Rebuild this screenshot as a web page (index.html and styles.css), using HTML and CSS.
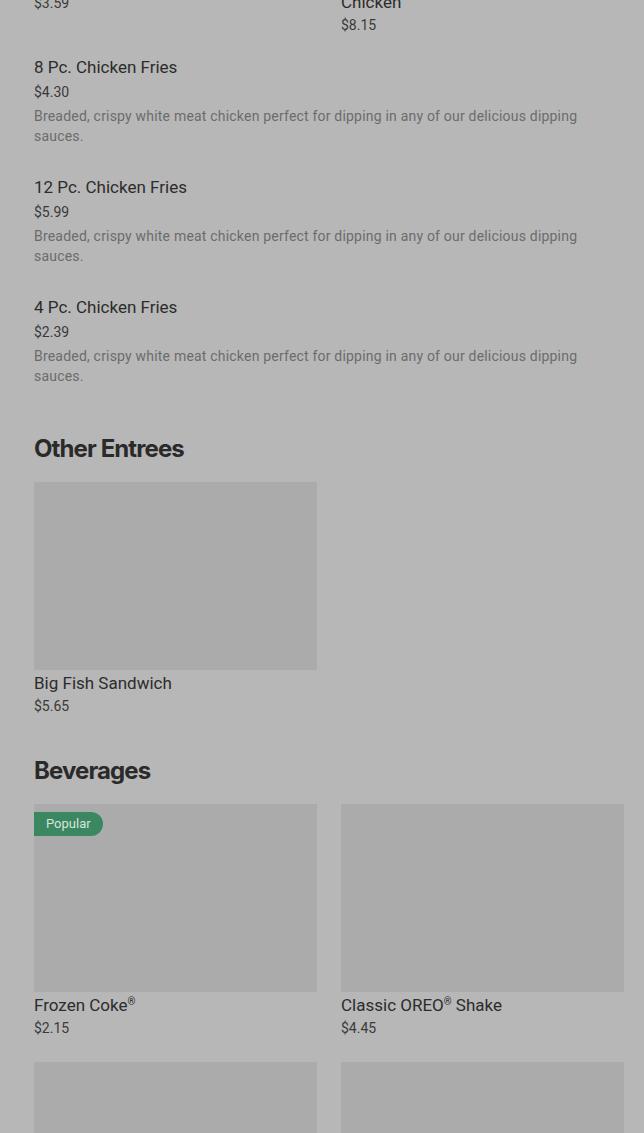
FILE: index.html
```html
<!DOCTYPE html>
<html>
<head>
<meta charset="utf-8">
<link rel="stylesheet" href="styles.css">
</head>
<body>
<main class="page">
  <div class="grid top-grid">
    <div class="card">
      <div class="thumb"></div>
      <div class="card-title">Crispy Chicken Sandwich</div>
      <div class="card-price">$3.59</div>
    </div>
    <div class="card">
      <div class="thumb"></div>
      <div class="card-title">10 Pc. Spicy Crispy<br>Chicken</div>
      <div class="card-price">$8.15</div>
    </div>
  </div>

  <div class="list">
    <div class="list-item">
      <div class="item-title">8 Pc. Chicken Fries</div>
      <div class="item-price">$4.30</div>
      <div class="item-desc">Breaded, crispy white meat chicken perfect for dipping in any of our delicious dipping sauces.</div>
    </div>
    <div class="list-item">
      <div class="item-title">12 Pc. Chicken Fries</div>
      <div class="item-price">$5.99</div>
      <div class="item-desc">Breaded, crispy white meat chicken perfect for dipping in any of our delicious dipping sauces.</div>
    </div>
    <div class="list-item">
      <div class="item-title">4 Pc. Chicken Fries</div>
      <div class="item-price">$2.39</div>
      <div class="item-desc">Breaded, crispy white meat chicken perfect for dipping in any of our delicious dipping sauces.</div>
    </div>
  </div>

  <section class="section">
    <h2 class="section-title">Other Entrees</h2>
    <div class="grid">
      <div class="card">
        <div class="thumb"></div>
        <div class="card-title">Big Fish Sandwich</div>
        <div class="card-price">$5.65</div>
      </div>
    </div>
  </section>

  <section class="section section-bev">
    <h2 class="section-title">Beverages</h2>
    <div class="grid">
      <div class="card">
        <div class="thumb"><span class="badge">Popular</span></div>
        <div class="card-title">Frozen Coke<sup class="reg">®</sup></div>
        <div class="card-price">$2.15</div>
      </div>
      <div class="card">
        <div class="thumb"></div>
        <div class="card-title">Classic OREO<sup class="reg">®</sup> Shake</div>
        <div class="card-price">$4.45</div>
      </div>
      <div class="card">
        <div class="thumb"></div>
        <div class="card-title">Vanilla Shake</div>
        <div class="card-price">$4.45</div>
      </div>
      <div class="card">
        <div class="thumb"></div>
        <div class="card-title">Chocolate Shake</div>
        <div class="card-price">$4.45</div>
      </div>
    </div>
  </section>
</main>
</body>
</html>
```

FILE: styles.css
```css
html, body {
  margin: 0;
  padding: 0;
  background: #b7b7b7;
}
body {
  font-family: Roboto, "Liberation Sans", sans-serif;
  color: #2c2c2c;
  overflow: hidden;
  height: 1133px;
}
.page {
  padding: 0 20px 0 34px;
  margin-top: -221px;
}
.grid {
  display: grid;
  grid-template-columns: 283px 283px;
  column-gap: 24px;
  row-gap: 24px;
}
.card {
  display: flex;
  flex-direction: column;
}
.thumb {
  position: relative;
  height: 188px;
  background: #ababab;
}
.card-title {
  margin-top: 2px;
  font-size: 17px;
  line-height: 22px;
  color: #2c2c2c;
}
.reg {
  font-size: 10px;
  line-height: 0;
  vertical-align: 6px;
}
.card-price {
  margin-top: 2px;
  font-size: 14px;
  line-height: 20px;
  color: #3a3a3a;
}
.list {
  margin-top: 21px;
}
.list-item {
  padding-bottom: 30px;
}
.item-title {
  font-size: 17px;
  line-height: 22px;
  color: #2c2c2c;
}
.item-price {
  margin-top: 4px;
  font-size: 14px;
  line-height: 20px;
  color: #3a3a3a;
}
.item-desc {
  margin-top: 4px;
  font-size: 14px;
  line-height: 20px;
  letter-spacing: 0.2px;
  color: #6c6c6c;
  max-width: 570px;
}
.section-title {
  margin: 17px 0 17px;
  font-family: Inter, "Liberation Sans", sans-serif;
  font-weight: 700;
  font-size: 24px;
  line-height: 32px;
  letter-spacing: -0.9px;
  color: #2a2a2a;
}
.section-bev {
  margin-top: 39px;
}
.badge {
  position: absolute;
  top: 8px;
  left: 0;
  height: 24px;
  padding: 0 12px;
  border-radius: 0 12px 12px 0;
  background: #3b8762;
  color: #d6e4dc;
  font-size: 13px;
  line-height: 24px;
}
```
